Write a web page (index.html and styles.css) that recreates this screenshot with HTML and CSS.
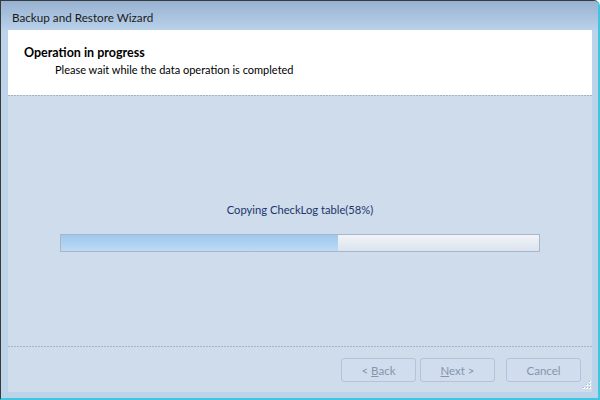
FILE: index.html
```html
<!DOCTYPE html>
<html>
<head>
<meta charset="utf-8">
<link rel="stylesheet" href="styles.css">
</head>
<body>
<div class="window">
  <div class="titlebar">Backup and Restore Wizard</div>
  <div class="client">
    <div class="header">
      <div class="h-title">Operation in progress</div>
      <div class="h-sub">Please wait while the data operation is completed</div>
    </div>
    <div class="dash"></div>
    <div class="main">
      <div class="status">Copying CheckLog table(58%)</div>
      <div class="progress"><div class="fill" style="width:58%"></div></div>
    </div>
    <div class="dash"></div>
    <div class="footer">
      <button class="btn">&lt; <u>B</u>ack</button>
      <button class="btn"><u>N</u>ext &gt;</button>
      <button class="btn cancel">Cancel</button>
    </div>
  </div>
  <svg class="grip" width="10" height="10" viewBox="0 0 10 10">
    <g fill="#ffffff"><rect x="8" y="0" width="2" height="2"/><rect x="5" y="3" width="2" height="2"/><rect x="8" y="3" width="2" height="2"/><rect x="2" y="6" width="2" height="2"/><rect x="5" y="6" width="2" height="2"/><rect x="8" y="6" width="2" height="2"/></g>
    <g fill="#9fb0c6"><rect x="8" y="0" width="1" height="1"/><rect x="5" y="3" width="1" height="1"/><rect x="8" y="3" width="1" height="1"/><rect x="2" y="6" width="1" height="1"/><rect x="5" y="6" width="1" height="1"/><rect x="8" y="6" width="1" height="1"/></g>
  </svg>
</div>
</body>
</html>
```
FILE: styles.css
```css
html, body { margin: 0; padding: 0; }
body { width: 600px; height: 400px; overflow: hidden; font-family: Lato, "Noto Sans", sans-serif; font-size: 12px; }
.window {
  position: relative;
  width: 600px; height: 400px; box-sizing: border-box;
  background: #bcd3ea;
  border-top: 1px solid #3a3a3a;
  border-left: 1px solid #3a3a3a;
  border-right: 2px solid #3fc6e0;
  border-bottom: 2px solid #3fc6e0;
  border-top-right-radius: 6px;
  display: flex; flex-direction: column;
}
.titlebar {
  height: 29px; box-sizing: border-box;
  background: linear-gradient(#97b2d1, #b9d1ea);
  padding: 9px 0 0 11px;
  color: #1a1a1a; font-size: 11.7px; line-height: 15px;
  border-top-right-radius: 5px;
}
.client {
  margin: 0 6px 6px 7px; flex: 1;
  display: flex; flex-direction: column;
  background: #cfdcec;
}
.header { height: 65px; background: #fff; box-sizing: border-box; padding: 15px 0 0 16px; color: #000; }
.h-title { font-weight: bold; font-size: 12.5px; line-height: 16px; }
.h-sub { padding-left: 31px; font-size: 11px; line-height: 17px; }
.dash { height: 1px; background: repeating-linear-gradient(90deg, #a7b3c6 0 2px, transparent 2px 3px); }
.main { flex: 1; display: flex; flex-direction: column; align-items: center; }
.status { margin-top: 106px; color: #20366a; font-size: 11.2px; line-height: 16px; }
.progress {
  margin-top: 16px; width: 480px; height: 18px; box-sizing: border-box;
  border: 1px solid #a9b5c9;
  background: linear-gradient(#f1f4f8, #dbe3ed);
}
.fill { height: 100%; background: linear-gradient(#9fc8ee, #bcdaf5); }
.footer { height: 45px; box-sizing: border-box; display: flex; justify-content: flex-end; padding: 11px 11px 0 0; align-items: flex-start; }
.btn {
  width: 75px; height: 24px; margin-left: 4px;
  background: #d0ddee; border: 1px solid #b4c3d6; border-radius: 3px;
  color: #8595ab; font-family: Lato, "Noto Sans", sans-serif; font-size: 11.5px; padding: 0;
}
.btn.cancel { margin-left: 11px; }
.grip { position: absolute; right: 7px; bottom: 7px; }
```
